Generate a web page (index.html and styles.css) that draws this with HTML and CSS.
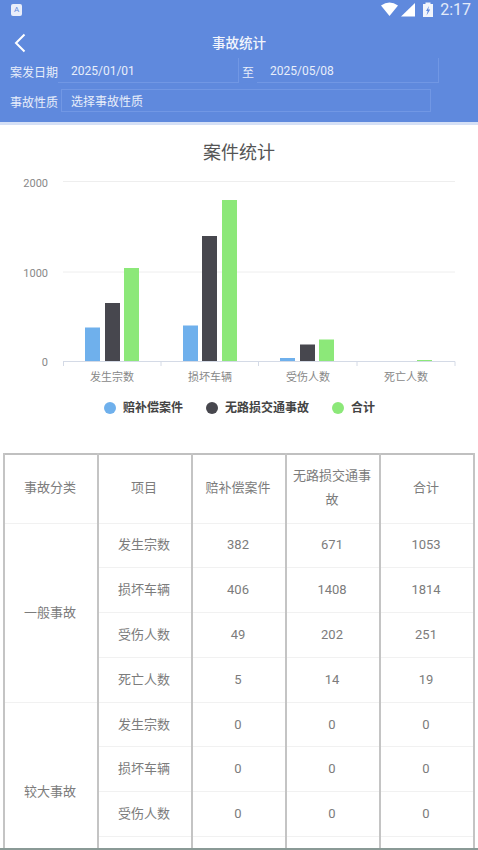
FILE: index.html
```html
<!DOCTYPE html>
<html lang="zh-CN">
<head>
    <meta charset="UTF-8">
    <title>事故统计</title>
    <link rel="stylesheet" href="styles.css">
</head>
<body>
    <div class="header">
        <div class="status-bar">
            <span class="notice">A</span>
            <svg class="status-icons" width="52" height="18" viewBox="0 0 52 18">
                <path d="M0 4.500Q8.500-1.500 17 4.500L8.500 15Z" fill="#fff"/>
                <path d="M20 15.500L34 2V15.500Z" fill="#fff"/>
                <path d="M42 3H44.500V1.500H49.500V3H52V16H42Z" fill="#f2f5fc"/>
                <path d="M48 5L45 10H46.700L45.500 14.500L49.200 8.500H47.200Z" fill="#5f89dd"/>
            </svg>
            <span class="clock">2:17</span>
        </div>
        <div class="title-bar">
            <svg class="back" width="12" height="20" viewBox="0 0 12 20">
                <path d="M10.500 1.500L2 10L10.500 18.500" fill="none" stroke="#fff" stroke-width="2"/>
            </svg>
            <span class="page-title">事故统计</span>
        </div>
        <div class="filter-row">
            <label class="filter-label">案发日期</label>
            <div class="date-input first">2025/01/01</div>
            <span class="to">至</span>
            <div class="date-input">2025/05/08</div>
        </div>
        <div class="filter-row second">
            <label class="filter-label">事故性质</label>
            <div class="select-input">选择事故性质</div>
        </div>
    </div>
    <div class="header-edge"></div>

    <h2 class="chart-title">案件统计</h2>

    <svg class="chart" width="478" height="240" viewBox="0 168 478 240">
        <g class="grid">
            <path d="M63 181.500H455M63 272H455"/>
        </g>
        <g class="y-labels">
            <text x="48" y="187">2000</text>
            <text x="48" y="277">1000</text>
            <text x="48" y="366">0</text>
        </g>
        <g fill="#6fb0ec">
            <rect x="85" y="327.500" width="15" height="34"/>
            <rect x="183" y="325.500" width="15" height="36"/>
            <rect x="280" y="358" width="15" height="3.500"/>
        </g>
        <g fill="#47474e">
            <rect x="105" y="303" width="15" height="58.500"/>
            <rect x="202" y="236" width="15" height="125.500"/>
            <rect x="300" y="344.500" width="15" height="17"/>
        </g>
        <g fill="#8ce879">
            <rect x="124" y="268" width="15" height="93.500"/>
            <rect x="222" y="200" width="15" height="161.500"/>
            <rect x="319" y="339.500" width="15" height="22"/>
            <rect x="417" y="360" width="15" height="1.500"/>
        </g>
        <path class="axis" d="M63 361.500H455M63.500 361.500V366M161 361.500V366M258.500 361.500V366M357 361.500V366M455 361.500V366"/>
        <g class="x-labels">
            <text x="112" y="381">发生宗数</text>
            <text x="210" y="381">损坏车辆</text>
            <text x="308" y="381">受伤人数</text>
            <text x="406" y="381">死亡人数</text>
        </g>
    </svg>

    <div class="legend">
        <span class="legend-item blue">赔补偿案件</span>
        <span class="legend-item dark">无路损交通事故</span>
        <span class="legend-item green">合计</span>
    </div>

    <table class="stats">
        <tr class="head">
            <td>事故分类</td><td>项目</td><td>赔补偿案件</td><td>无路损交通事故</td><td>合计</td>
        </tr>
        <tr><td rowspan="4">一般事故</td><td>发生宗数</td><td>382</td><td>671</td><td>1053</td></tr>
        <tr><td>损坏车辆</td><td>406</td><td>1408</td><td>1814</td></tr>
        <tr><td>受伤人数</td><td>49</td><td>202</td><td>251</td></tr>
        <tr><td>死亡人数</td><td>5</td><td>14</td><td>19</td></tr>
        <tr><td rowspan="4">较大事故</td><td>发生宗数</td><td>0</td><td>0</td><td>0</td></tr>
        <tr><td>损坏车辆</td><td>0</td><td>0</td><td>0</td></tr>
        <tr><td>受伤人数</td><td>0</td><td>0</td><td>0</td></tr>
        <tr><td></td><td></td><td></td><td></td></tr>
    </table>
    <div class="page-edge"></div>
</body>
</html>
```
FILE: styles.css
```css
* { margin: 0; padding: 0; box-sizing: border-box; }
html, body { height: 850px; overflow: hidden; }
body {
    position: relative;
    background: #fff;
    font-family: "Roboto", "Noto Sans CJK SC", sans-serif;
    color: #666;
}

.header {
    height: 122px;
    background: #5f89dd;
    color: #e8eefa;
}
.header-edge { height: 3px; background: #d5e0f6; }

.status-bar {
    display: flex;
    align-items: center;
    height: 20px;
    padding: 0 7px 0 11px;
}
.notice {
    width: 11px;
    height: 12px;
    border-radius: 2px;
    background: #e9eefa;
    color: #5f89dd;
    font-size: 8px;
    line-height: 12px;
    text-align: center;
}
.status-icons { margin-left: auto; }
.clock { margin-left: 7px; font-size: 16px; line-height: 20px; color: #e4ebf9; }

.title-bar {
    position: relative;
    height: 38px;
    display: flex;
    align-items: center;
    justify-content: center;
}
.back { position: absolute; left: 14px; top: 13px; }
.page-title { font-size: 13.500px; font-weight: 500; color: #f2f5fc; margin-top: 5px; }

.filter-row {
    display: flex;
    align-items: center;
    height: 25px;
    padding-left: 10px;
    font-size: 12px;
}
.filter-row.second { margin-top: 5px; }
.filter-label { width: 48px; flex: none; padding-top: 2px; }
.date-input {
    width: 182px;
    height: 25px;
    padding-left: 13px;
    line-height: 26px;
    border-right: 1px solid #7197e4;
    border-bottom: 1px solid #7197e4;
}
.date-input.first { width: 181px; }
.to { width: 18px; padding-top: 2px; text-align: center; }
.select-input {
    width: 370px;
    height: 23px;
    margin-left: 3px;
    padding-left: 9px;
    line-height: 24px;
    border: 1px solid #7197e4;
}

.chart-title {
    height: 29px;
    margin-top: 14px;
    font-size: 18px;
    font-weight: 400;
    line-height: 27px;
    text-align: center;
    color: #555;
}
.chart { display: block; }
.grid path { fill: none; stroke: #eeeeee; stroke-width: 1; }
.axis { fill: none; stroke: #d4dae6; stroke-width: 1; }
.y-labels text { font-size: 11px; fill: #888; text-anchor: end; }
.x-labels text { font-size: 11px; fill: #888; text-anchor: middle; }

.legend {
    display: flex;
    justify-content: center;
    gap: 23px;
    height: 20px;
    margin-top: -10px;
    padding-left: 1px;
    font-size: 12px;
    font-weight: 700;
    line-height: 20px;
    color: #444;
}
.legend-item { display: flex; align-items: center; gap: 7px; }
.legend-item::before {
    content: "";
    width: 12px;
    height: 12px;
    border-radius: 50%;
}
.legend-item.blue::before { background: #6fb0ec; }
.legend-item.dark::before { background: #47474e; }
.legend-item.green::before { background: #8ce879; }

.stats {
    width: 472px;
    margin: 35px 0 0 3px;
    table-layout: fixed;
    border-collapse: collapse;
    border-top: 2px solid #c0c0c0;
    border-left: 2px solid #c0c0c0;
    border-right: 2px solid #c0c0c0;
    font-size: 13px;
    text-align: center;
    color: #7c7c7c;
}
.stats td {
    height: 44.800px;
    padding: 0 7px 0 5px;
    border-left: 2px solid #c4c4c4;
    border-right: 2px solid #c4c4c4;
    border-top: 1px solid #f1f1f1;
    line-height: 24px;
}
.stats .head td { height: 69px; padding-bottom: 2px; border-top: 0; }

.page-edge {
    position: absolute;
    left: 0;
    right: 0;
    bottom: 0;
    height: 2px;
    background: #8a9a96;
}
```
